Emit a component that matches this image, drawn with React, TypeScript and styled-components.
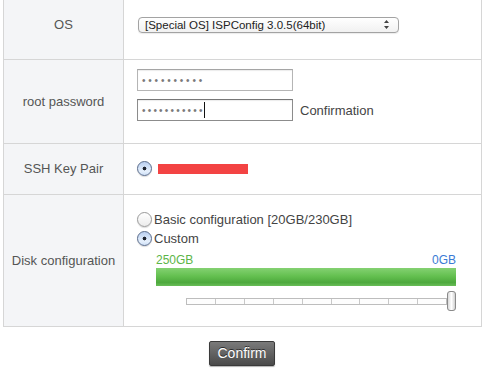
import React from "react";
import styled, { createGlobalStyle } from "styled-components";

const GlobalStyle = createGlobalStyle`
  html, body {
    margin: 0;
    padding: 0;
    background: #ffffff;
  }
  body {
    font-family: "Liberation Sans", Arial, sans-serif;
    font-size: 13px;
    color: #444;
  }
`;

const Page = styled.div`
  width: 484px;
  height: 373px;
  overflow: hidden;
  padding: 0 3px 0 3px;
  box-sizing: border-box;
`;

const Table = styled.table`
  width: 479px;
  margin-top: -9px;
  border-collapse: collapse;
`;

const Row = styled.tr<{ $h: number }>`
  height: ${(p) => p.$h}px;
`;

const Label = styled.th`
  width: 120px;
  padding: 0;
  background: #f4f5f7;
  border: 1px solid #d6d6d6;
  border-top: none;
  font-weight: normal;
  font-size: 13px;
  color: #555;
  text-align: center;
  vertical-align: middle;
  box-sizing: border-box;
`;

const Cell = styled.td<{ $pad?: string }>`
  padding: ${(p) => p.$pad || "0 0 0 13px"};
  border: 1px solid #d6d6d6;
  border-top: none;
  vertical-align: middle;
`;

const Select = styled.div`
  width: 244px;
  height: 14px;
  margin: 0 0 0 1px;
  border: 1px solid #a3a3a3;
  border-radius: 4px;
  background: linear-gradient(#ffffff, #f1f1f1);
  box-shadow: 0 1px 1px rgba(0, 0, 0, 0.08);
  display: flex;
  align-items: center;
  justify-content: space-between;
  padding: 0 9px 0 6px;
  box-sizing: content-box;
  font-size: 11.5px;
  color: #222;
`;

const Stack = styled.div<{ $gap: number; $shift?: number }>`
  display: flex;
  flex-direction: column;
  gap: ${(p) => p.$gap}px;
  margin-top: ${(p) => p.$shift || 0}px;
`;

const Line = styled.div`
  display: flex;
  align-items: center;
`;

const Field = styled.div<{ $focus?: boolean; $spacing: number }>`
  width: 150px;
  height: 20px;
  border: 1px solid ${(p) => (p.$focus ? "#8c8c8c" : "#b5b5b5")};
  border-top-color: ${(p) => (p.$focus ? "#777" : "#a5a5a5")};
  box-shadow: inset 0 1px 1px rgba(0, 0, 0, 0.08);
  background: #fff;
  display: flex;
  align-items: center;
  padding: 0 0 0 4px;
  font-size: 10px;
  letter-spacing: ${(p) => p.$spacing}px;
  color: #7a7a7a;
`;

const Caret = styled.span`
  display: inline-block;
  width: 1px;
  height: 16px;
  margin-left: -1px;
  background: #111;
`;

const Hint = styled.span`
  margin-left: 7px;
  color: #444;
`;

const Radio = styled.span<{ $on?: boolean }>`
  width: 13px;
  height: 13px;
  border-radius: 50%;
  border: 1px solid ${(p) => (p.$on ? "#5c6d8c" : "#9a9a9a")};
  background: ${(p) =>
    p.$on
      ? "radial-gradient(circle at 50% 50%, #1e2430 0, #1e2430 1.6px, transparent 2.2px), linear-gradient(#b9cff0, #e6f0fc 70%, #cfe0f7)"
      : "linear-gradient(#ffffff, #ececec)"};
  box-shadow: 0 1px 1px rgba(0, 0, 0, 0.15);
  flex: none;
`;

const Redact = styled.span`
  width: 90px;
  height: 10px;
  margin-left: 6px;
  background: #f34343;
`;

const Option = styled.label`
  display: flex;
  align-items: center;
  height: 16px;
  gap: 2px;
  font-size: 13px;
  color: #444;
`;

const Usage = styled.div`
  width: 300px;
  margin: 7px 0 0 19px;
`;

const Amounts = styled.div`
  display: flex;
  justify-content: space-between;
  font-size: 12px;
  line-height: 14px;
`;

const Amount = styled.span<{ $color: string }>`
  color: ${(p) => p.$color};
`;

const Bar = styled.div`
  height: 18px;
  margin-top: 1px;
  background: linear-gradient(#84d172, #64c050 45%, #4ea93d 80%, #69bd57);
`;

const Slider = styled.div`
  display: flex;
  align-items: center;
  height: 20px;
  margin: 5px 0 0 30px;
`;

const Track = styled.div`
  display: flex;
  width: 267px;
  height: 5px;
  border: 1px solid #bdbdbd;
  background: #fdfdfd;
`;

const Tick = styled.span`
  flex: 1;
  border-right: 1px solid #c8c8c8;
  &:last-child {
    border-right: none;
  }
`;

const Thumb = styled.div`
  width: 7px;
  height: 18px;
  border: 1px solid #8a8a8a;
  border-radius: 3px;
  background: linear-gradient(90deg, #d9d9d9, #ffffff 50%, #d0d0d0);
`;

const Footer = styled.div`
  display: flex;
  justify-content: center;
  padding-top: 14px;
`;

const Button = styled.button`
  width: 66px;
  height: 25px;
  border: 1px solid #3a3a3a;
  border-radius: 2px;
  background: linear-gradient(#7a7a7a, #4a4a4a);
  box-shadow: 0 1px 1px rgba(0, 0, 0, 0.3);
  color: #fff;
  font-family: "Liberation Sans", Arial, sans-serif;
  font-size: 14px;
  text-shadow: 0 -1px 0 rgba(0, 0, 0, 0.6);
  padding: 0;
`;

function UpDown() {
  return (
    <svg width="5" height="9" viewBox="0 0 5 9">
      <path d="M2.5 0 L5 3 L0 3 Z M2.5 9 L5 6 L0 6 Z" fill="#444" />
    </svg>
  );
}

export default function App() {
  const ticks = Array.from({ length: 9 });

  return (
    <Page>
      <GlobalStyle />
      <Table>
        <tbody>
          <Row $h={68}>
            <Label>OS</Label>
            <Cell>
              <Select>
                <span>[Special OS] ISPConfig 3.0.5(64bit)</span>
                <UpDown />
              </Select>
            </Cell>
          </Row>
          <Row $h={84}>
            <Label>root password</Label>
            <Cell>
              <Stack $gap={8} $shift={-12}>
                <Line>
                  <Field $spacing={2.8}>••••••••••</Field>
                </Line>
                <Line>
                  <Field $focus $spacing={2.2}>
                    •••••••••••
                    <Caret />
                  </Field>
                  <Hint>Confirmation</Hint>
                </Line>
              </Stack>
            </Cell>
          </Row>
          <Row $h={51}>
            <Label>SSH Key Pair</Label>
            <Cell>
              <Line>
                <Radio $on />
                <Redact />
              </Line>
            </Cell>
          </Row>
          <Row $h={132}>
            <Label>Disk configuration</Label>
            <Cell $pad="2px 0 0 13px">
              <Stack $gap={3}>
                <Option>
                  <Radio />
                  Basic configuration [20GB/230GB]
                </Option>
                <Option>
                  <Radio $on />
                  Custom
                </Option>
              </Stack>
              <Usage>
                <Amounts>
                  <Amount $color="#5cb547">250GB</Amount>
                  <Amount $color="#3a7bd5">0GB</Amount>
                </Amounts>
                <Bar />
                <Slider>
                  <Track>
                    {ticks.map((_, i) => (
                      <Tick key={i} />
                    ))}
                  </Track>
                  <Thumb />
                </Slider>
              </Usage>
            </Cell>
          </Row>
        </tbody>
      </Table>
      <Footer>
        <Button>Confirm</Button>
      </Footer>
    </Page>
  );
}
